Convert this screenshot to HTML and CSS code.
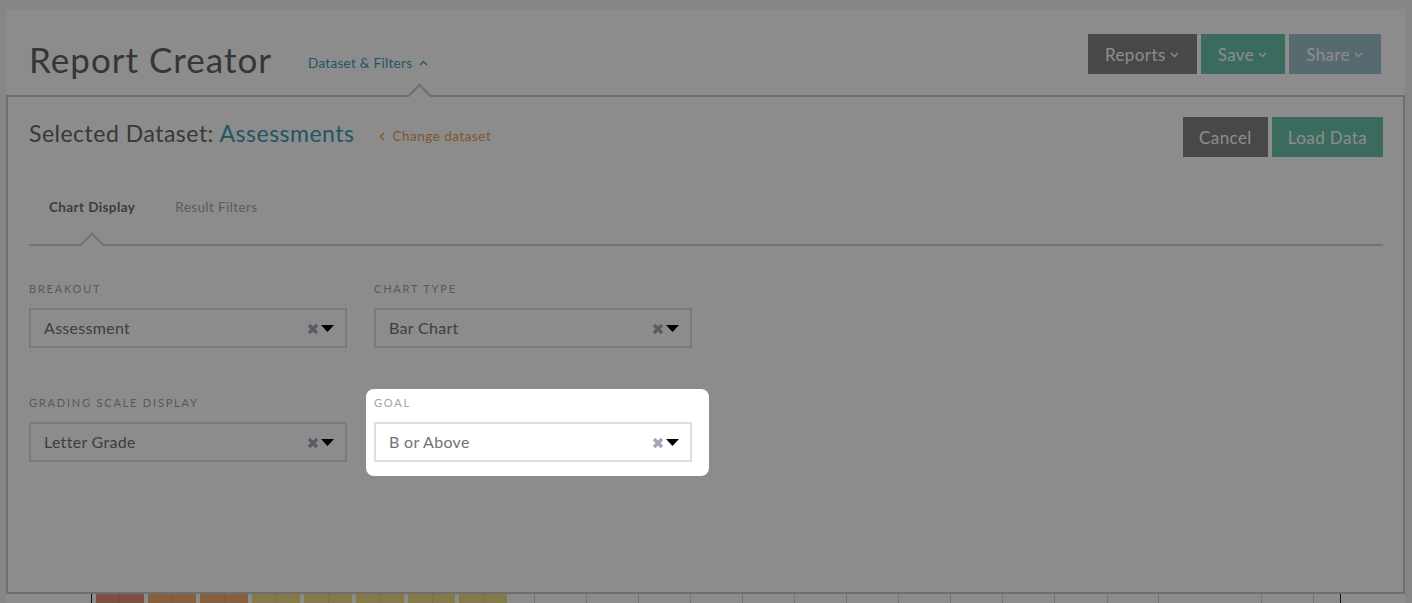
FILE: index.html
```html
<!doctype html>
<html>
	<head>
		<meta charset="UTF-8">
		<title>Report Creator</title>
		<link rel="stylesheet" href="styles.css">
	</head>
	<body>
		<div class="page">
			<header class="top">
				<h1 class="title">Report Creator</h1>
				<a class="toggle" href="#">Dataset &amp; Filters
					<svg width="9" height="6" viewBox="0 0 9 6"><polyline points="1,5 4.5,1.5 8,5" fill="none" stroke="currentColor" stroke-width="1.4"/></svg>
				</a>
				<div class="actions">
					<button class="btn dark">Reports <svg width="9" height="6" viewBox="0 0 9 6"><polyline points="1,1 4.5,4.5 8,1" fill="none" stroke="currentColor" stroke-width="1.4"/></svg></button>
					<button class="btn green">Save <svg width="9" height="6" viewBox="0 0 9 6"><polyline points="1,1 4.5,4.5 8,1" fill="none" stroke="currentColor" stroke-width="1.4"/></svg></button>
					<button class="btn blue">Share <svg width="9" height="6" viewBox="0 0 9 6"><polyline points="1,1 4.5,4.5 8,1" fill="none" stroke="currentColor" stroke-width="1.4"/></svg></button>
				</div>
			</header>

			<section class="panel">
				<div class="panel-head">
					<h2 class="dataset">Selected Dataset: <span class="dataset-name">Assessments</span></h2>
					<a class="change" href="#">
						<svg width="6" height="9" viewBox="0 0 6 9"><polyline points="5,1 1.5,4.5 5,8" fill="none" stroke="currentColor" stroke-width="1.4"/></svg>
						Change dataset
					</a>
					<div class="actions">
						<button class="btn dark">Cancel</button>
						<button class="btn green">Load Data</button>
					</div>
				</div>

				<nav class="tabs">
					<span class="tab active">Chart Display</span>
					<span class="tab">Result Filters</span>
				</nav>

				<div class="fields">
					<div class="field">
						<div class="label">Breakout</div>
						<div class="select">
							<span class="value">Assessment</span>
							<svg class="clear" width="12" height="12" viewBox="0 0 12 12"><path d="M2 2 L10 10 M10 2 L2 10" stroke="currentColor" stroke-width="3.2"/></svg>
							<svg class="caret" width="13" height="7" viewBox="0 0 13 7"><polygon points="0,0 13,0 6.5,7"/></svg>
						</div>
					</div>
					<div class="field">
						<div class="label">Chart Type</div>
						<div class="select">
							<span class="value">Bar Chart</span>
							<svg class="clear" width="12" height="12" viewBox="0 0 12 12"><path d="M2 2 L10 10 M10 2 L2 10" stroke="currentColor" stroke-width="3.2"/></svg>
							<svg class="caret" width="13" height="7" viewBox="0 0 13 7"><polygon points="0,0 13,0 6.5,7"/></svg>
						</div>
					</div>
					<div class="field">
						<div class="label">Grading Scale Display</div>
						<div class="select">
							<span class="value">Letter Grade</span>
							<svg class="clear" width="12" height="12" viewBox="0 0 12 12"><path d="M2 2 L10 10 M10 2 L2 10" stroke="currentColor" stroke-width="3.2"/></svg>
							<svg class="caret" width="13" height="7" viewBox="0 0 13 7"><polygon points="0,0 13,0 6.5,7"/></svg>
						</div>
					</div>
					<div class="field focus">
						<div class="spot"></div>
						<div class="label">Goal</div>
						<div class="select">
							<span class="value">B or Above</span>
							<svg class="clear" width="12" height="12" viewBox="0 0 12 12"><path d="M2 2 L10 10 M10 2 L2 10" stroke="currentColor" stroke-width="3.2"/></svg>
							<svg class="caret" width="13" height="7" viewBox="0 0 13 7"><polygon points="0,0 13,0 6.5,7"/></svg>
						</div>
					</div>
				</div>
			</section>

			<div class="chart">
				<div class="col"><div class="cell red"></div></div>
				<div class="col"><div class="cell orange"></div></div>
				<div class="col"><div class="cell orange"></div></div>
				<div class="col"><div class="cell yellow"></div></div>
				<div class="col"><div class="cell yellow"></div></div>
				<div class="col"><div class="cell yellow"></div></div>
				<div class="col"><div class="cell yellow"></div></div>
				<div class="col"><div class="cell yellow"></div></div>
				<div class="col"></div>
				<div class="col"></div>
				<div class="col"></div>
				<div class="col"></div>
				<div class="col"></div>
				<div class="col"></div>
				<div class="col"></div>
				<div class="col"></div>
				<div class="col"></div>
				<div class="col"></div>
				<div class="col"></div>
				<div class="col"></div>
				<div class="col"></div>
				<div class="col"></div>
				<div class="col"></div>
				<div class="col"></div>
			</div>
		</div>
	</body>
</html>
```

FILE: styles.css
```css
html,body{
	margin:0;
	overflow:hidden;
}
body{
	background:#f4f4f4;
	font-family:Lato,"Open Sans",sans-serif;
	color:#6e6e6e;
}
.page{
	margin:9px 7px 0 6px;
	background:#fff;
}

/* header */
.top{
	display:flex;
	align-items:flex-start;
	height:86px;
	padding:0 24px 0 23px;
	box-sizing:border-box;
}
.title{
	margin:30px 0 0 0;
	font-size:35px;
	line-height:40px;
	font-weight:400;
	letter-spacing:1px;
	color:#636363;
}
.toggle{
	margin:46px 0 0 36px;
	font-size:13.5px;
	line-height:16px;
	letter-spacing:0.3px;
	color:#3c9cb6;
	text-decoration:none;
}
.toggle svg{margin-left:3px;vertical-align:2px}
.actions{
	margin-left:auto;
	display:flex;
	gap:4px;
}
.top .actions{margin-top:25px}
.btn{
	height:40px;
	padding:0 16px;
	border:0;
	font-family:Lato,"Open Sans",sans-serif;
	font-size:17px;
	letter-spacing:0.4px;
	color:#fff;
	display:flex;
	align-items:center;
	gap:4px;
}
.btn svg{margin-top:1px}
.top .btn{padding:0 18px 0 17px}
.dark{background:#838383}
.green{background:#6cc3ad}
.blue{background:#9fc1cd}

/* panel */
.panel{
	position:relative;
	height:499px;
	box-sizing:border-box;
	border:2px solid #c9c9c9;
	padding:20px 20px 0 21px;
}
.panel::before{
	content:"";
	position:absolute;
	left:403px;
	top:-10px;
	width:17px;
	height:17px;
	box-sizing:border-box;
	background:#fff;
	border-top:2px solid #c9c9c9;
	border-left:2px solid #c9c9c9;
	transform:rotate(45deg);
}
.panel-head{
	display:flex;
	align-items:center;
	height:40px;
}
.dataset{
	margin:0 0 8px 0;
	font-size:23px;
	letter-spacing:0.5px;
	font-weight:400;
	color:#666;
}
.dataset-name{color:#3c9cb6}
.change{
	margin-left:24px;
	margin-bottom:3px;
	font-size:13.5px;
	letter-spacing:0.5px;
	color:#eb9d4f;
	text-decoration:none;
}
.change svg{margin-right:4px}

/* tabs */
.tabs{
	margin-top:40px;
	display:flex;
	gap:40px;
	padding-left:20px;
	border-bottom:2px solid #d2d2d2;
}
.tab{
	position:relative;
	font-size:13.5px;
	line-height:20px;
	letter-spacing:0.4px;
	padding-bottom:27px;
	color:#a6a6a6;
}
.tab.active{color:#707070;font-weight:700}
.tab.active::after{
	content:"";
	position:absolute;
	left:50%;
	bottom:-10px;
	margin-left:-9px;
	width:18px;
	height:18px;
	box-sizing:border-box;
	background:#fff;
	border-top:2px solid #d2d2d2;
	border-left:2px solid #d2d2d2;
	transform:rotate(45deg);
}

/* fields */
.fields{
	margin-top:35px;
	display:grid;
	grid-template-columns:318px 318px;
	column-gap:27px;
	row-gap:47px;
}
.field{position:relative}
.label{
	font-size:11px;
	line-height:16px;
	letter-spacing:1.8px;
	text-transform:uppercase;
	color:#a3a3a3;
	margin-bottom:11px;
}
.select{
	display:flex;
	align-items:center;
	height:40px;
	box-sizing:border-box;
	border:2px solid #dedede;
	padding:0 11px 0 13px;
	font-size:16px;
	letter-spacing:0.3px;
	color:#727272;
}
.value{flex:1;margin-bottom:1px}
.clear{color:#a0a5b8;margin-top:2px}
.caret{margin-left:2px;fill:#000}

/* spotlight over the goal field */
.spot{
	position:absolute;
	top:-6px;
	left:-8px;
	right:-17px;
	bottom:-14px;
	border-radius:8px;
	box-shadow:0 0 0 3000px rgba(0,0,0,0.45);
	z-index:10;
	pointer-events:none;
}

/* chart strip below */
.chart{
	display:flex;
	margin-left:85px;
	width:1250px;
	height:9px;
	box-sizing:border-box;
	border-left:1px solid #222;
	border-right:1px solid #222;
	padding-left:2px;
}
.col{
	flex:1;
	display:flex;
	background:linear-gradient(90deg,transparent 25.5px,#d6d6d6 25.5px,#d6d6d6 26.5px,transparent 26.5px);
}
.cell{
	flex:1;
	margin:0 2px;
	background-image:linear-gradient(90deg,transparent 23.5px,rgba(0,0,0,0.07) 23.5px,rgba(0,0,0,0.07) 24.5px,transparent 24.5px);
}
.red{background-color:#e38c80}
.orange{background-color:#f4b070}
.yellow{background-color:#f0dc86}
```
